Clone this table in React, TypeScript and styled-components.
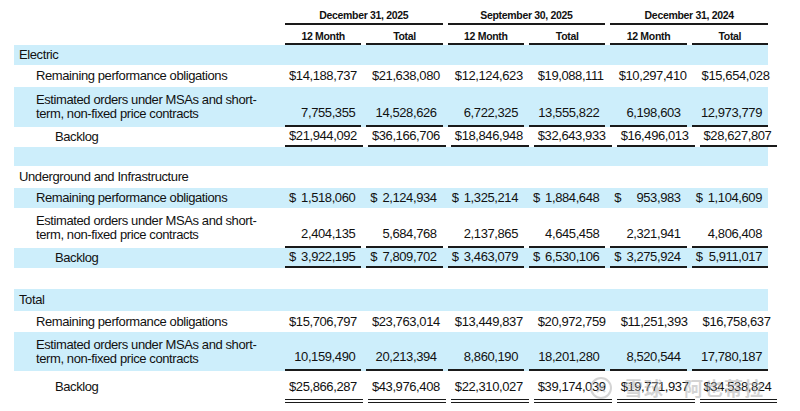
import React from "react";
import styled, { createGlobalStyle, css } from "styled-components";

const BLUE = "#cdeefb";

const Global = createGlobalStyle`
  html, body { margin: 0; padding: 0; background: #fff; }
  body {
    font-family: "Liberation Sans", Arial, sans-serif;
    color: #111;
  }
`;

const Page = styled.div`
  position: relative;
  width: 800px;
  height: 411px;
  overflow: hidden;
  padding-left: 14px;
  box-sizing: border-box;
`;

const Table = styled.div`
  width: 754px;
  display: flex;
  flex-direction: column;
`;

const Row = styled.div<{ $h: number; $blue?: boolean }>`
  display: grid;
  grid-template-columns: 266px repeat(6, 1fr);
  height: ${(p) => p.$h}px;
  background: ${(p) => (p.$blue ? BLUE : "transparent")};
`;

const HeadRow = styled.div<{ $h: number }>`
  display: grid;
  grid-template-columns: 266px repeat(6, 1fr);
  height: ${(p) => p.$h}px;
`;

const GroupCell = styled.div`
  grid-column: span 2;
  padding-left: 5px;
  display: flex;
`;

const HeadText = css`
  flex: 1;
  border-bottom: 2px solid #1a1a1a;
  font-weight: 700;
  font-size: 10.5px;
  letter-spacing: -0.32px;
  text-align: center;
  line-height: 14px;
  box-sizing: border-box;
`;

const GroupTitle = styled.div`
  ${HeadText}
  padding-top: 8px;
`;

const SubCell = styled.div`
  padding-left: 5px;
  display: flex;
`;

const SubTitle = styled.div`
  ${HeadText}
  padding-top: 4px;
`;

const BodyText = css`
  font-size: 13px;
  letter-spacing: -0.4px;
  line-height: 14px;
  white-space: nowrap;
`;

const Label = styled.div<{ $indent: number; $two?: boolean }>`
  ${BodyText}
  padding-left: ${(p) => p.$indent}px;
  display: flex;
  align-items: center;
  ${(p) =>
    p.$two &&
    css`
      align-items: flex-start;
      padding-top: 6px;
    `}
`;

const Cell = styled.div`
  padding-left: 5px;
  display: flex;
`;

type Line = "none" | "single" | "double";
type Pos = "center" | "bottom" | "total";

const Value = styled.div<{ $line: Line; $split: boolean; $pos: Pos }>`
  ${BodyText}
  flex: 1;
  display: flex;
  justify-content: ${(p) => (p.$split ? "space-between" : "flex-end")};
  padding: 0 6px 0 4px;
  box-sizing: border-box;
  ${(p) =>
    p.$pos === "center"
      ? css`
          align-items: center;
        `
      : p.$pos === "bottom"
      ? css`
          align-items: flex-end;
          padding-bottom: 5px;
        `
      : css`
          align-items: center;
          padding-top: 3px;
        `}
  ${(p) =>
    p.$line === "single"
      ? css`
          border-bottom: 2px solid #1a1a1a;
        `
      : p.$line === "double"
      ? css`
          border-bottom: 4px double #1a1a1a;
        `
      : ""}
`;

const Watermark = styled.div`
  position: absolute;
  left: 588px;
  top: 374px;
  display: flex;
  align-items: center;
  gap: 6px;
  color: rgba(170, 170, 170, 0.5);
  font-family: "Noto Sans CJK SC", sans-serif;
  font-size: 19px;
  font-weight: 700;
  pointer-events: none;
  letter-spacing: 1px;
`;

const Mark = styled.svg`
  width: 30px;
  height: 24px;
`;

type DataRow =
  | { kind: "title"; label: string; h: number; blue?: boolean }
  | { kind: "blank"; h: number; blue?: boolean }
  | {
      kind: "data";
      label: React.ReactNode;
      indent: number;
      two?: boolean;
      values: string[];
      h: number;
      blue?: boolean;
      line: Line;
      pos: Pos;
    };

const EST = (
  <>
    Estimated orders under MSAs and short-
    <br />
    term, non-fixed price contracts
  </>
);

const rows: DataRow[] = [
  { kind: "title", label: "Electric", h: 20, blue: true },
  {
    kind: "data",
    label: "Remaining performance obligations",
    indent: 22,
    values: ["$14,188,737", "$21,638,080", "$12,124,623", "$19,088,111", "$10,297,410", "$15,654,028"],
    h: 22,
    line: "none",
    pos: "center",
  },
  {
    kind: "data",
    label: EST,
    indent: 22,
    two: true,
    values: ["7,755,355", "14,528,626", "6,722,325", "13,555,822", "6,198,603", "12,973,779"],
    h: 40,
    blue: true,
    line: "single",
    pos: "bottom",
  },
  {
    kind: "data",
    label: "Backlog",
    indent: 41,
    values: ["$21,944,092", "$36,166,706", "$18,846,948", "$32,643,933", "$16,496,013", "$28,627,807"],
    h: 20,
    line: "single",
    pos: "center",
  },
  { kind: "blank", h: 19, blue: true },
  { kind: "title", label: "Underground and Infrastructure", h: 22 },
  {
    kind: "data",
    label: "Remaining performance obligations",
    indent: 22,
    values: ["$|1,518,060", "$|2,124,934", "$|1,325,214", "$|1,884,648", "$|953,983", "$|1,104,609"],
    h: 20,
    blue: true,
    line: "none",
    pos: "center",
  },
  {
    kind: "data",
    label: EST,
    indent: 22,
    two: true,
    values: ["2,404,135", "5,684,768", "2,137,865", "4,645,458", "2,321,941", "4,806,408"],
    h: 40,
    line: "single",
    pos: "bottom",
  },
  {
    kind: "data",
    label: "Backlog",
    indent: 41,
    values: ["$|3,922,195", "$|7,809,702", "$|3,463,079", "$|6,530,106", "$|3,275,924", "$|5,911,017"],
    h: 20,
    blue: true,
    line: "single",
    pos: "center",
  },
  { kind: "blank", h: 21 },
  { kind: "title", label: "Total", h: 22, blue: true },
  {
    kind: "data",
    label: "Remaining performance obligations",
    indent: 22,
    values: ["$15,706,797", "$23,763,014", "$13,449,837", "$20,972,759", "$11,251,393", "$16,758,637"],
    h: 21,
    line: "none",
    pos: "center",
  },
  {
    kind: "data",
    label: EST,
    indent: 22,
    two: true,
    values: ["10,159,490", "20,213,394", "8,860,190", "18,201,280", "8,520,544", "17,780,187"],
    h: 39,
    blue: true,
    line: "single",
    pos: "bottom",
  },
  {
    kind: "data",
    label: "Backlog",
    indent: 41,
    values: ["$25,866,287", "$43,976,408", "$22,310,027", "$39,174,039", "$19,771,937", "$34,538,824"],
    h: 32,
    line: "double",
    pos: "total",
  },
];

const groups = ["December 31, 2025", "September 30, 2025", "December 31, 2024"];

function renderValue(v: string, line: Line, pos: Pos, i: number) {
  const split = v.includes("|");
  const [a, b] = split ? v.split("|") : ["", v];
  return (
    <Cell key={i}>
      <Value $line={line} $split={split} $pos={pos}>
        {split && <span>{a}</span>}
        <span>{b}</span>
      </Value>
    </Cell>
  );
}

export default function App() {
  return (
    <>
      <Global />
      <Page>
        <Table>
          <HeadRow $h={25}>
            <div />
            {groups.map((g) => (
              <GroupCell key={g}>
                <GroupTitle>{g}</GroupTitle>
              </GroupCell>
            ))}
          </HeadRow>
          <HeadRow $h={20}>
            <div />
            {[0, 1, 2].flatMap((g) => [
              <SubCell key={`m${g}`}>
                <SubTitle>12 Month</SubTitle>
              </SubCell>,
              <SubCell key={`t${g}`}>
                <SubTitle>Total</SubTitle>
              </SubCell>,
            ])}
          </HeadRow>
          {rows.map((r, idx) => {
            if (r.kind === "blank") return <Row key={idx} $h={r.h} $blue={r.blue} />;
            if (r.kind === "title")
              return (
                <Row key={idx} $h={r.h} $blue={r.blue}>
                  <Label $indent={5}>{r.label}</Label>
                </Row>
              );
            return (
              <Row key={idx} $h={r.h} $blue={r.blue}>
                <Label $indent={r.indent} $two={r.two}>
                  <span>{r.label}</span>
                </Label>
                {r.values.map((v, i) => renderValue(v, r.line, r.pos, i))}
              </Row>
            );
          })}
        </Table>
        <Watermark>
          <Mark viewBox="0 0 30 24">
            <circle cx="13" cy="12" r="10" fill="none" stroke="currentColor" strokeWidth="2" />
            <path d="M9 8 L17 16 M17 8 L9 16" stroke="currentColor" strokeWidth="2" fill="none" />
          </Mark>
          <span>雪球</span>
          <span style={{ marginLeft: 14 }}>阿也蒂拉</span>
        </Watermark>
      </Page>
    </>
  );
}
